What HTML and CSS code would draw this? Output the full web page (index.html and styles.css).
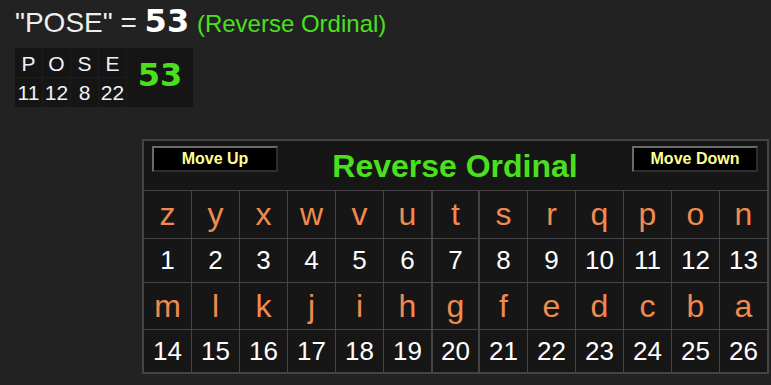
FILE: index.html
```html
<!DOCTYPE html>
<html lang="en">
<head>
<meta charset="utf-8">
<title>POSE - Reverse Ordinal</title>
<link rel="stylesheet" href="styles.css">
</head>
<body>
<div class="page">
  <div class="title">"POSE" = <span class="title-sum">53</span> <span class="title-cipher">(Reverse Ordinal)</span></div>

  <div class="breakdown">
    <div class="bd-letter">P</div>
    <div class="bd-letter">O</div>
    <div class="bd-letter">S</div>
    <div class="bd-letter">E</div>
    <div class="bd-total">53</div>
    <div class="bd-value">11</div>
    <div class="bd-value">12</div>
    <div class="bd-value">8</div>
    <div class="bd-value">22</div>
  </div>

  <div class="cipher">
    <div class="cipher-head">
      <button class="move-btn" type="button">Move Up</button>
      <div class="cipher-name">Reverse Ordinal</div>
      <button class="move-btn" type="button">Move Down</button>
    </div>

    <div class="cell letter">z</div>
    <div class="cell letter">y</div>
    <div class="cell letter">x</div>
    <div class="cell letter">w</div>
    <div class="cell letter">v</div>
    <div class="cell letter">u</div>
    <div class="cell letter mid">t</div>
    <div class="cell letter">s</div>
    <div class="cell letter">r</div>
    <div class="cell letter">q</div>
    <div class="cell letter">p</div>
    <div class="cell letter">o</div>
    <div class="cell letter">n</div>

    <div class="cell num">1</div>
    <div class="cell num">2</div>
    <div class="cell num">3</div>
    <div class="cell num">4</div>
    <div class="cell num">5</div>
    <div class="cell num">6</div>
    <div class="cell num mid">7</div>
    <div class="cell num">8</div>
    <div class="cell num">9</div>
    <div class="cell num">10</div>
    <div class="cell num">11</div>
    <div class="cell num">12</div>
    <div class="cell num">13</div>

    <div class="cell letter">m</div>
    <div class="cell letter">l</div>
    <div class="cell letter">k</div>
    <div class="cell letter">j</div>
    <div class="cell letter">i</div>
    <div class="cell letter">h</div>
    <div class="cell letter mid">g</div>
    <div class="cell letter">f</div>
    <div class="cell letter">e</div>
    <div class="cell letter">d</div>
    <div class="cell letter">c</div>
    <div class="cell letter">b</div>
    <div class="cell letter">a</div>

    <div class="cell num">14</div>
    <div class="cell num">15</div>
    <div class="cell num">16</div>
    <div class="cell num">17</div>
    <div class="cell num">18</div>
    <div class="cell num">19</div>
    <div class="cell num mid">20</div>
    <div class="cell num">21</div>
    <div class="cell num">22</div>
    <div class="cell num">23</div>
    <div class="cell num">24</div>
    <div class="cell num">25</div>
    <div class="cell num">26</div>
  </div>
</div>
</body>
</html>
```

FILE: styles.css
```css
html, body {
  margin: 0;
  padding: 0;
  background: #222222;
}

body {
  font-family: "Liberation Sans", Arial, sans-serif;
  color: #f0f0f0;
}

.page {
  padding: 3px 0 0 15px;
}

/* heading line: phrase, total and cipher name */
.title {
  font-size: 28px;
  line-height: 36px;
  color: #eeeeee;
  white-space: nowrap;
}

.title-sum {
  font-family: "DejaVu Sans", sans-serif;
  font-weight: bold;
  font-size: 32px;
  color: #ffffff;
}

.title-cipher {
  font-size: 24px;
  color: #4ae01e;
}

/* per-letter breakdown */
.breakdown {
  margin-top: 6px;
  display: grid;
  grid-template-columns: 27px 27px 27px 27px 66px;
  grid-template-rows: 29px 29px;
  gap: 1px;
  width: 178px;
  background: #1d1d1d;
}

.bd-letter,
.bd-value {
  background: #151515;
  display: flex;
  align-items: center;
  justify-content: center;
  font-size: 21px;
  color: #eef2f6;
}

.bd-letter {
  padding-top: 2px;
}

.bd-total {
  grid-column: 5;
  grid-row: 1 / span 2;
  background: #151515;
  display: flex;
  align-items: center;
  justify-content: center;
  padding-bottom: 5px;
  font-family: "DejaVu Sans", sans-serif;
  font-weight: bold;
  font-size: 32px;
  color: #4ae01e;
}

/* cipher chart */
.cipher {
  margin: 32px 0 0 127px;
  display: grid;
  grid-template-columns: repeat(13, 47px);
  grid-template-rows: 49px 47px 43px 46px 42px;
  gap: 1px;
  width: 623px;
  background: #444444;
  border: 2px solid #444444;
}

.cipher-head {
  grid-column: 1 / -1;
  background: #161616;
  display: flex;
  justify-content: space-between;
  align-items: flex-start;
  padding: 5px 9px 0 8px;
}

.move-btn {
  width: 126px;
  height: 26px;
  padding: 0;
  background: #000000;
  border: 2px solid;
  border-color: #6a6a6a #2e2e2e #2e2e2e #6a6a6a;
  font-family: "Liberation Sans", Arial, sans-serif;
  font-weight: bold;
  font-size: 16px;
  color: #ffff90;
  line-height: 20px;
}

.cipher-name {
  align-self: center;
  margin-bottom: 5px;
  font-weight: bold;
  font-size: 32px;
  line-height: 32px;
  color: #4ae01e;
}

.cell {
  background: #161616;
  display: flex;
  align-items: center;
  justify-content: center;
}

.cell.mid {
  border-left: 1px solid #444444;
  border-right: 1px solid #444444;
}

.letter {
  font-size: 32px;
  color: #f08a50;
}

.num {
  font-size: 26px;
  color: #ffffff;
}
```
